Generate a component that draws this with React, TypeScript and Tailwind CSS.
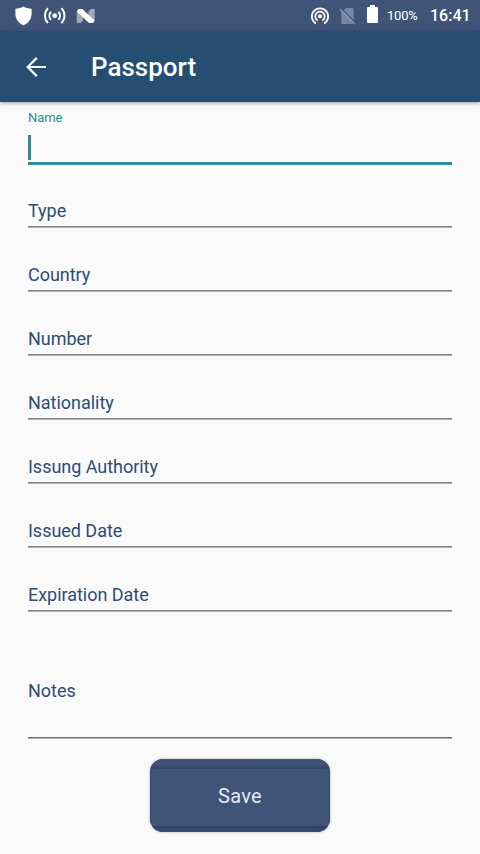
type FieldProps = { label: string };

const fields = [
  "Type",
  "Country",
  "Number",
  "Nationality",
  "Issung Authority",
  "Issued Date",
  "Expiration Date",
];

function Field({ label }: FieldProps) {
  return (
    <div className="flex h-16 flex-col justify-end">
      <label className="mb-[5px] text-[18px] leading-[21px] tracking-[-0.03px] text-[#2d4c74]">{label}</label>
      <div className="h-[2px] border-t border-[#858383] bg-[#b0aeae]" />
    </div>
  );
}

function StatusBar() {
  return (
    <div className="flex h-[31px] items-center bg-[#405478] text-white">
      <svg className="ml-[15px] h-[20px] w-[17px] shrink-0" viewBox="0 0 17 20" fill="currentColor">
        <path d="M8.5 0.6C6.2 2.1 3.4 2.6 0.4 2.7V7.5C0.4 13.5 3.8 17.2 8.5 19.3C13.2 17.2 16.6 13.5 16.6 7.5V2.7C13.6 2.6 10.8 2.1 8.5 0.6Z" />
      </svg>
      <svg className="ml-[12px] h-[18px] w-[22px] shrink-0" viewBox="0 0 22 18" fill="none" stroke="currentColor" strokeWidth="1.9">
        <circle cx="10.7" cy="8.7" r="2.4" fill="currentColor" stroke="none" />
        <path d="M7 4.7A5.6 5.6 0 0 0 7 12.7M14.4 4.7A5.6 5.6 0 0 1 14.4 12.7" />
        <path d="M4 1.3A10.4 10.4 0 0 0 4 16.1M17.4 1.3A10.4 10.4 0 0 1 17.4 16.1" />
      </svg>
      <svg className="ml-[10px] h-[16px] w-[20px] shrink-0" viewBox="0 0 20 16">
        <path fill="#a0aabb" d="M0.7 3V15H4.6L7 12.4V6ZM18.7 1H14.8L12.4 3.6V10L18.7 13Z" />
        <path fill="#fff" d="M1.2 2.4L2.6 1H6.4L17.8 11.8L18.6 13L16.8 15H13L1.8 4.6Z" />
      </svg>
      <svg className="ml-[215px] h-[18px] w-[18px] shrink-0" viewBox="0 0 18 18" fill="none" stroke="currentColor" strokeWidth="1.8">
        <circle cx="9" cy="9.3" r="2" fill="currentColor" stroke="none" />
        <path d="M6.6 13.4A4.7 4.7 0 1 1 11.4 13.4M4.9 16.4A8.1 8.1 0 1 1 13.1 16.4" />
      </svg>
      <svg className="ml-[10px] h-[18px] w-[18px] shrink-0" viewBox="0 0 18 18">
        <path fill="#7887a5" d="M7.3 1H13.2Q14.7 1 14.7 2.5V15.4Q14.7 16.9 13.2 16.9H3.8Q2.3 16.9 2.3 15.4V4.4Z" />
        <path stroke="#405478" strokeWidth="1.1" d="M2.5 1.3L17 16.3" />
        <path stroke="#8e9bb4" strokeWidth="1.2" d="M1 1.8L16 17.3" />
      </svg>
      <svg className="mb-[3px] ml-[9px] h-[18px] w-[13px] shrink-0" viewBox="0 0 13 18" fill="currentColor">
        <path d="M4 0H9V2H11Q12 2 12 3V17Q12 18 11 18H2Q1 18 1 17V3Q1 2 2 2H4Z" />
      </svg>
      <span className="ml-[8px] w-[31px] text-[13px] leading-[16px] tracking-[-0.2px]">100%</span>
      <span className="ml-[12px] text-[16px] font-medium leading-[20px]">16:41</span>
    </div>
  );
}

export default function App() {
  return (
    <div className="flex h-[854px] w-[480px] flex-col overflow-hidden bg-[#fafafa] font-['Roboto',sans-serif]">
      <StatusBar />
      <header className="flex h-[71px] shrink-0 items-center bg-[#264d72] text-white shadow-[0_1px_4px_rgba(0,0,0,0.4)]">
        <button className="ml-[26px] h-5 w-5" aria-label="Back">
          <svg className="block h-5 w-5" viewBox="0 0 20 20" fill="none" stroke="currentColor" strokeWidth="2.2">
            <path d="M20 10H2M10.8 0.9L1.7 10L10.8 19.1" />
          </svg>
        </button>
        <h1 className="ml-[45px] text-[26px] font-medium leading-[30px]">Passport</h1>
      </header>
      <main className="flex flex-col px-7">
        <div className="-mb-px flex h-[63px] flex-col pt-[8px]">
          <label className="text-[13px] leading-[16px] tracking-[-0.1px] text-[#2f8c99]">Name</label>
          <div className="mt-[9px] h-[25px] w-[3px] shrink-0 bg-[#2f8c99]" />
          <div className="mt-[2px] h-[3px] shrink-0 bg-[#2f8c99]" />
        </div>
        {fields.map((label) => (
          <Field key={label} label={label} />
        ))}
        <div className="flex h-[127px] flex-col justify-end">
          <label className="mb-[36px] text-[18px] leading-[21px] text-[#2d4c74]">Notes</label>
          <div className="h-[2px] border-t border-[#747373] bg-[#b0aeae]" />
        </div>
        <button className="mt-[20px] flex h-[73px] w-[180px] flex-col self-center overflow-hidden rounded-[13px] bg-[#405478] shadow-[0_0_3px_rgba(0,0,0,0.3)]">
          <span className="h-[10px] w-full shrink-0 bg-linear-to-b from-[#405478] from-50% to-[#324561]" />
          <span className="flex w-full grow items-center justify-center rounded-t-[3px] border-x border-[#36496a] pb-[3px] text-[20px] leading-6 tracking-[0.3px] text-[#e6e9f0]">
            Save
          </span>
          <span className="h-[6px] w-full shrink-0 bg-linear-to-b from-[#304362] to-[#3a4d70]" />
        </button>
      </main>
    </div>
  );
}
